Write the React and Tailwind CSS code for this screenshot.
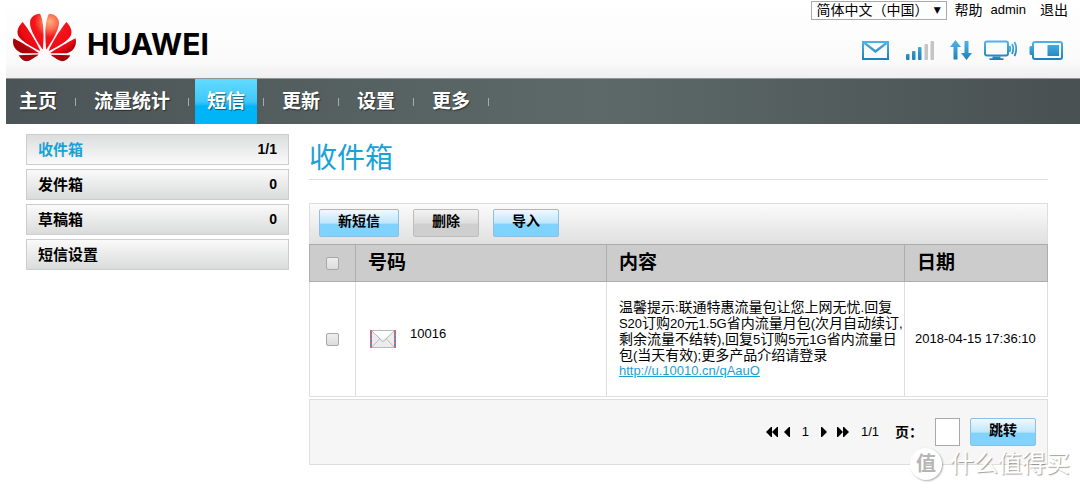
import React from 'react';
import { SiHuawei } from 'react-icons/si';

const NAV = ['主页', '流量统计', '短信', '更新', '设置', '更多'];

const FOLDERS = [
  { label: '收件箱', count: '1/1' },
  { label: '发件箱', count: '0' },
  { label: '草稿箱', count: '0' },
  { label: '短信设置', count: '' },
];

const MESSAGES = [
  {
    from: '10016',
    lines: [
      '温馨提示:联通特惠流量包让您上网无忧.回复',
      'S20订购20元1.5G省内流量月包(次月自动续订,',
      '剩余流量不结转),回复5订购5元1G省内流量日',
      '包(当天有效);更多产品介绍请登录',
    ],
    link: 'http://u.10010.cn/qAauO',
    date: '2018-04-15 17:36:10',
  },
];

// Latin runs are set one step smaller than the Chinese around them
function Mixed({ text }) {
  return text.split(/([\x20-\x7e]+)/).map((run, i) =>
    i % 2 ? (
      <span key={i} className="text-[13px] leading-none">{run}</span>
    ) : (
      run
    )
  );
}

function Logo() {
  return (
    <div className="flex items-center gap-[11px]">
      <svg width="0" height="0" className="absolute" aria-hidden="true">
        <defs>
          <radialGradient id="petal" gradientUnits="userSpaceOnUse" cx="14" cy="6" r="14">
            <stop offset="0" stopColor="#ffb080" />
            <stop offset="0.22" stopColor="#fb6a4c" />
            <stop offset="0.42" stopColor="#f5141c" />
            <stop offset="0.8" stopColor="#ee0a12" />
            <stop offset="1" stopColor="#a80008" />
          </radialGradient>
        </defs>
      </svg>
      <SiHuawei size={63} fill="url(#petal)" className="-my-1.5" aria-hidden="true" />
      <span className="pt-3 font-['Inter',sans-serif] text-[30px] leading-8 font-bold text-black">
        HUAWEI
      </span>
    </div>
  );
}

function StatusIcons() {
  return (
    <div className="flex items-center gap-4 pr-[5px]">
      <svg width="28" height="20" viewBox="0 0 28 20" fill="none" stroke="url(#ico)" strokeWidth="2">
        <defs>
          <linearGradient id="ico" gradientUnits="userSpaceOnUse" x1="0" y1="0" x2="0" y2="20">
            <stop offset="0" stopColor="#4fb9ea" />
            <stop offset="1" stopColor="#1d7fb8" />
          </linearGradient>
        </defs>
        <rect x="1" y="2" width="25" height="17" />
        <path d="M2.5 3l11 8.5L24.5 3" strokeWidth="2.4" />
      </svg>
      <svg width="28" height="20" viewBox="0 0 28 20">
        <g fill="url(#ico)">
          <rect x="0" y="14" width="3.5" height="6" rx="1" />
          <rect x="6" y="11" width="3.5" height="9" rx="1" />
          <rect x="12" y="7" width="3.5" height="13" rx="1" />
        </g>
        <g fill="#c4c4c4">
          <rect x="18.5" y="4" width="3.5" height="16" rx="1" />
          <rect x="24.5" y="1" width="3.5" height="19" rx="1" />
        </g>
      </svg>
      <svg width="22" height="20" viewBox="0 0 22 20" fill="url(#ico)">
        <path d="M5.5 0L11 7H7.5v12.5h-4V7H0z" />
        <path d="M16.5 20L11 13h3.5V1h4v12H22z" />
      </svg>
      <svg width="33" height="20" viewBox="0 0 33 20" fill="none" stroke="url(#ico)" className="-ml-1">
        <rect x="1" y="1.5" width="23" height="14" rx="2" strokeWidth="2" />
        <path d="M8.5 17.5h8M5.5 19.2h14" strokeWidth="1.8" />
        <path d="M25.5 6q1.5 2.5 0 6M28 4q2.5 4.5 0 10M30.5 2q3.5 6.5 0 14" strokeWidth="1.8" />
      </svg>
      <svg width="34" height="20" viewBox="0 0 34 20" fill="none" className="-ml-1">
        <rect x="4" y="2" width="29" height="17" rx="2" stroke="url(#ico)" strokeWidth="2" />
        <path d="M3.5 6H2q-1.5 0-1.5 1.5v6q0 1.5 1.5 1.5h1.5z" fill="url(#ico)" />
        <rect x="18.5" y="5" width="11.5" height="11" fill="url(#ico)" />
      </svg>
    </div>
  );
}

function Button({ children, gray }) {
  const tone = gray
    ? 'border-[#bdbdbd] from-[#f2f2f2] via-[#dedede] to-[#cfcfcf]'
    : 'border-[#8dbfe2] from-[#f0f9ff] via-[#bfe6fc] to-[#80d3fc]';
  return (
    <button
      type="button"
      className={`h-7 px-[18px] pb-1 border rounded-xs bg-linear-to-b via-50% to-55% text-sm leading-5 font-bold text-black ${tone}`}
    >
      {children}
    </button>
  );
}

function Check({ label }) {
  return (
    <input
      type="checkbox"
      aria-label={label}
      className="block mx-auto size-[13px] appearance-none rounded-xs border border-[#a8a8a8] bg-linear-to-b from-[#eeeeee] to-[#dcdcdc]"
    />
  );
}

function Envelope() {
  return (
    <svg width="26" height="18" viewBox="0 0 26 18" fill="none" aria-hidden="true">
      <rect width="26" height="18" fill="#ececec" />
      <path d="M1 .5h24M1 17.5h24" stroke="#b9b9b9" />
      <path d="M2 1l11 8.5L24 1z" fill="#fff" />
      <path d="M2 1l8 8q3 5 6 0l8-8M2 17l7.5-8M24 17l-7.5-8" stroke="#bdbdbd" />
      <path d="M1 0v18M25 0v18" stroke="#d96a6a" strokeWidth="2" />
      <path d="M1 2v16M25 2v16" stroke="#6f7fc0" strokeWidth="2" strokeDasharray="2 2" />
    </svg>
  );
}

// Pager arrow, doubled for first / last page
function PageArrow({ label, double, flip }) {
  return (
    <button type="button" aria-label={label} className={flip ? 'rotate-180' : ''}>
      <svg width={double ? 12 : 6} height="10" viewBox={double ? '0 0 12 10' : '0 0 6 10'}>
        <path d="M0 0h1l5 5-5 5H0z" />
        {double && <path d="M6 0h1l5 5-5 5H6z" />}
      </svg>
    </button>
  );
}

function Header() {
  return (
    <header className="flex justify-between bg-linear-to-b from-white via-[#fafafa] via-80% to-[#efefef] pl-[7px] pr-3">
      <div className="pt-3 pb-[15px]">
        <Logo />
      </div>
      <div className="flex flex-col items-end gap-5">
        <div className="flex items-center gap-2 text-sm leading-5">
          <div className="relative">
            <select
              aria-label="语言"
              className="block h-[19px] w-[136px] appearance-none border border-[#a9a9a9] bg-white pl-[5px] text-sm leading-4"
            >
              <option>简体中文（中国）</option>
            </select>
            <span className="pointer-events-none absolute right-1.5 top-0 text-[9px] leading-[18px] font-['DejaVu_Sans',sans-serif]">▼</span>
          </div>
          <a href="#help">帮助</a>
          <a href="#admin" className="text-[13px]">admin</a>
          <a href="#logout" className="ml-1.5">退出</a>
        </div>
        <StatusIcons />
      </div>
    </header>
  );
}

function Nav() {
  return (
    <nav className="flex items-center border-t border-[#8f9494] bg-linear-to-r from-[#4b5456] via-[#5d6969] via-55% to-[#485052] pl-px">
      {NAV.map((label) => (
        <React.Fragment key={label}>
          <a
            href="#"
            className={`px-3 text-[19px] leading-[45px] font-bold text-white text-shadow-[1px_1px_1px_#00000080] ${
              label === '短信' ? 'bg-linear-to-b from-[#5fd9ff] from-5% via-[#3cc8fb] via-50% to-[#00b5f7] to-60%' : ''
            }`}
          >
            {label}
          </a>
          <span className="mx-1.5 h-2 w-px bg-[#a3abab]" />
        </React.Fragment>
      ))}
    </nav>
  );
}

function Sidebar() {
  return (
    <aside className="flex w-[263px] shrink-0 flex-col gap-1">
      {FOLDERS.map(({ label, count }, i) => (
        <a
          key={label}
          href="#"
          className={`flex items-center justify-between border border-[#cdcdcd] bg-linear-to-b px-[11px] text-[15px] leading-[29px] font-bold ${
            i === 0 ? 'from-[#dcdddd] to-[#fafafa]' : 'from-[#fafafa] to-[#dadbdb]'
          }`}
        >
          <span className={i === 0 ? 'text-[#1ba1d6]' : 'text-black'}>{label}</span>
          <span className="text-sm leading-[29px] text-black">{count}</span>
        </a>
      ))}
    </aside>
  );
}

function Inbox() {
  const th = 'border border-[#adadad] px-3 text-left text-[19px] leading-9 font-bold';
  const td = 'border border-[#dedede] px-3';
  return (
    <main className="min-w-0 flex-1">
      <h1 className="border-b border-[#dedede] pt-[5px] text-[28px] leading-10 text-[#1ba1d6]">收件箱</h1>

      <div className="mt-[23px] flex gap-3.5 border border-b-0 border-[#dedede] bg-linear-to-b from-[#fbfbfb] to-[#e0e0e0] px-[9px] pt-[5px] pb-[7px]">
        <Button>新短信</Button>
        <Button gray>删除</Button>
        <Button>导入</Button>
      </div>

      <table className="w-full table-fixed border-collapse">
        <colgroup>
          <col className="w-[46px]" />
          <col className="w-[34%]" />
          <col className="w-[298px]" />
          <col className="w-[143px]" />
        </colgroup>
        <thead className="bg-[#cccccc]">
          <tr>
            <th className="border border-[#adadad]"><Check label="全选" /></th>
            <th className={th}>号码</th>
            <th className={th}>内容</th>
            <th className={th}>日期</th>
          </tr>
        </thead>
        <tbody>
          {MESSAGES.map((m) => (
            <tr key={m.from}>
              <td className="border border-[#dedede]"><Check label={m.from} /></td>
              <td className={`${td} text-[13px] leading-4`}>
                <div className="flex gap-3.5 pb-1 pl-0.5">
                  <span className="pt-1"><Envelope /></span>
                  <span>{m.from}</span>
                </div>
              </td>
              <td className={`${td} whitespace-nowrap py-[17px] text-sm leading-4`}>
                {m.lines.map((line) => (
                  <div key={line} className="leading-4"><Mixed text={line} /></div>
                ))}
                <a href={m.link} className="block text-[13px] leading-4 text-[#1ba1d6] underline">{m.link}</a>
              </td>
              <td className="border border-[#dedede] px-2.5 text-[13px] whitespace-nowrap">{m.date}</td>
            </tr>
          ))}
        </tbody>
      </table>

      <div className="mt-0.5 flex items-center justify-end border border-[#dedede] bg-[#f6f6f6] py-[18px] pr-[11px] text-[13px]">
        <div className="flex items-center gap-1.5 leading-5">
          <PageArrow label="首页" double flip />
          <PageArrow label="上一页" flip />
          <span className="mx-1.5">1</span>
          <PageArrow label="下一页" />
          <span className="ml-1 flex"><PageArrow label="末页" double /></span>
        </div>
        <span className="ml-3 leading-5">1/1</span>
        <label htmlFor="page" className="ml-4 text-sm font-bold">页：</label>
        <input id="page" type="text" className="ml-3 mr-2.5 h-7 w-[25px] border border-[#a9a9a9] bg-white" />
        <Button>跳转</Button>
      </div>
    </main>
  );
}

export default function App() {
  return (
    <div className="relative min-h-screen bg-white pl-1.5 font-['Liberation_Sans','Noto_Sans_CJK_SC',sans-serif] text-black">
      <Header />
      <Nav />
      <div className="flex items-start gap-5 pt-2.5 pr-8 pb-6 pl-5">
        <Sidebar />
        <Inbox />
      </div>

      {/* Site watermark, floats over the pager */}
      <div className="pointer-events-none absolute right-2.5 bottom-2.5 flex items-center gap-2 text-white text-shadow-[1px_1px_1px_#00000060]">
        <span className="flex size-8 items-center justify-center rounded-full bg-white text-xl leading-8 font-bold text-[#b5b5b5] shadow-[1px_1px_2px_#00000050] text-shadow-none">
          值
        </span>
        <span className="text-2xl leading-8">什么值得买</span>
      </div>
    </div>
  );
}
